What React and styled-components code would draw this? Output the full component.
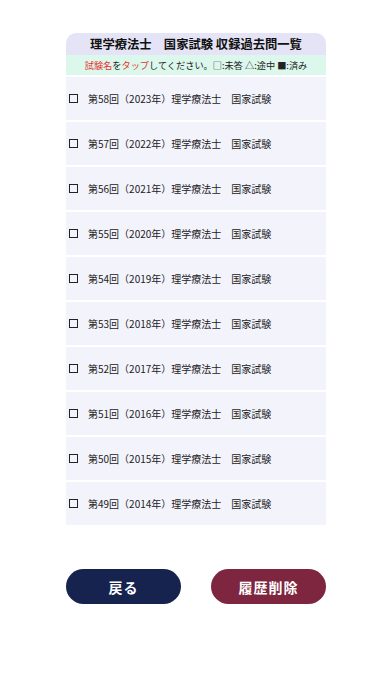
import React from "react";
import styled, { createGlobalStyle } from "styled-components";

const Global = createGlobalStyle`
  html, body { margin: 0; padding: 0; background: #ffffff; }
  body { font-family: "Noto Sans CJK JP", "Noto Sans", sans-serif; }
`;

const Page = styled.div`
  width: 392px;
  height: 696px;
  display: flex;
  flex-direction: column;
  align-items: center;
  padding-top: 33px;
  box-sizing: border-box;
`;

const Panel = styled.div`
  width: 260px;
  display: flex;
  flex-direction: column;
`;

const Title = styled.div`
  height: 22px;
  background: #e4e4f6;
  border-radius: 10px 10px 0 0;
  display: flex;
  align-items: center;
  justify-content: center;
  font-size: 12.3px;
  font-weight: 700;
  color: #111;
  white-space: pre;
`;

const Notice = styled.div`
  height: 20px;
  background: #dcf7ec;
  display: flex;
  align-items: center;
  justify-content: center;
  font-size: 9.2px;
  color: #222;
  white-space: pre;
  margin-bottom: 2px;
`;

const Red = styled.span`
  color: #e8322f;
`;

const List = styled.div`
  display: flex;
  flex-direction: column;
  gap: 2px;
`;

const Row = styled.div`
  height: 43px;
  background: #f3f3fc;
  display: flex;
  align-items: center;
  padding-left: 3px;
  gap: 10px;
  font-size: 10px;
  color: #222;
  white-space: pre;
`;

const Box = styled.span`
  width: 9px;
  height: 9px;
  box-sizing: border-box;
  border: 1.6px solid #222;
  flex: none;
`;

const Buttons = styled.div`
  width: 260px;
  display: flex;
  justify-content: space-between;
  margin-top: 44px;
`;

const Button = styled.button`
  width: 115px;
  height: 35px;
  border: none;
  border-radius: 18px;
  background: ${(p) => p.$bg};
  color: #fff;
  font-family: "Noto Sans CJK JP", sans-serif;
  font-size: 14px;
  font-weight: 700;
  letter-spacing: 1px;
  padding: 0;
`;

const years = [
  [58, 2023], [57, 2022], [56, 2021], [55, 2020], [54, 2019],
  [53, 2018], [52, 2017], [51, 2016], [50, 2015], [49, 2014],
];

export default function App() {
  return (
    <>
      <Global />
      <Page>
        <Panel>
          <Title>理学療法士　国家試験 収録過去問一覧</Title>
          <Notice>
            <Red>試験名</Red>を<Red>タップ</Red>してください。□:未答 △:途中 ■:済み
          </Notice>
          <List>
            {years.map(([n, y]) => (
              <Row key={n}>
                <Box />
                <span>{`第${n}回（${y}年）理学療法士　国家試験`}</span>
              </Row>
            ))}
          </List>
        </Panel>
        <Buttons>
          <Button $bg="#16234f">戻る</Button>
          <Button $bg="#7e2540">履歴削除</Button>
        </Buttons>
      </Page>
    </>
  );
}
